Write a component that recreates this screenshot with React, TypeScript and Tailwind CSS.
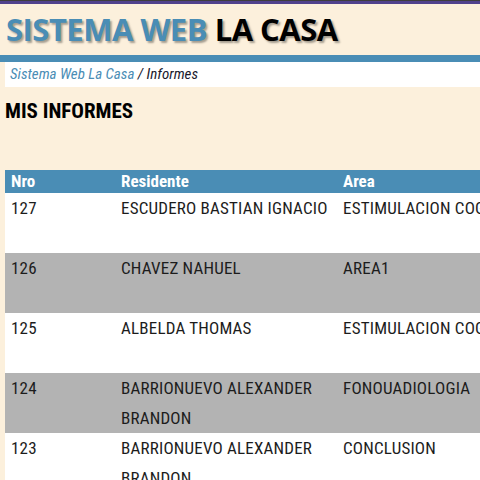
const rows = [
  { nro: "127", res: ["ESCUDERO BASTIAN IGNACIO"], area: "ESTIMULACION COGNITIVA" },
  { nro: "126", res: ["CHAVEZ NAHUEL"], area: "AREA1" },
  { nro: "125", res: ["ALBELDA THOMAS"], area: "ESTIMULACION COGNITIVA" },
  { nro: "124", res: ["BARRIONUEVO ALEXANDER", "BRANDON"], area: "FONOUADIOLOGIA" },
  { nro: "123", res: ["BARRIONUEVO ALEXANDER", "BRANDON"], area: "CONCLUSION" },
];

export default function App() {
  return (
    <div className="w-[480px] h-[480px] overflow-hidden bg-[#fcf0dc] font-['Roboto_Condensed',Roboto,sans-serif]">
      <div className="h-px bg-[#3e3e3e]" />
      <div className="h-[3px] bg-[#50418c]" />
      <div className="h-[51px] pl-[6px] pt-[3px] whitespace-nowrap font-['Open_Sans',sans-serif] font-bold text-[31px] leading-[44px] tracking-[-0.5px]">
        <span className="text-[#4a8db5] [text-shadow:2px_2px_2px_rgba(0,0,0,0.35)]">SISTEMA WEB</span>{" "}
        <span className="text-black [text-shadow:2px_2px_2px_rgba(0,0,0,0.35)]">LA CASA</span>
      </div>
      <div className="h-[7px] bg-[#4a8db5]" />
      <div className="ml-[5px] h-[25px] bg-white pl-[5px] italic text-[15px] leading-[24px] whitespace-nowrap">
        <span className="text-[#4a8db5]">Sistema Web La Casa</span>
        <span className="text-[#1a1a2e]"> / Informes</span>
      </div>
      <h1 className="pl-[5px] pt-[10px] font-bold text-[21px] leading-[28px] text-black">MIS INFORMES</h1>
      <div className="ml-[5px] mt-[45px] w-[620px]">
        <div className="grid grid-cols-[110px_222px_288px] bg-[#4a8db5] h-[23px] text-white font-bold text-[17px] leading-[23px]">
          <div className="pl-[6px]">Nro</div>
          <div className="pl-[6px]">Residente</div>
          <div className="pl-[6px]">Area</div>
        </div>
        {rows.map((r, i) => (
          <div
            key={r.nro}
            className={`grid grid-cols-[110px_222px_288px] h-[60px] text-[17px] tracking-[0.2px] leading-[30px] text-[#1c1c1c] ${i % 2 === 1 ? "bg-[#b3b3b3]" : "bg-white"}`}
          >
            <div className="pl-[6px]">{r.nro}</div>
            <div className="pl-[6px]">
              {r.res.map((l) => (
                <div key={l}>{l}</div>
              ))}
            </div>
            <div className="pl-[6px] whitespace-nowrap">{r.area}</div>
          </div>
        ))}
      </div>
    </div>
  );
}
